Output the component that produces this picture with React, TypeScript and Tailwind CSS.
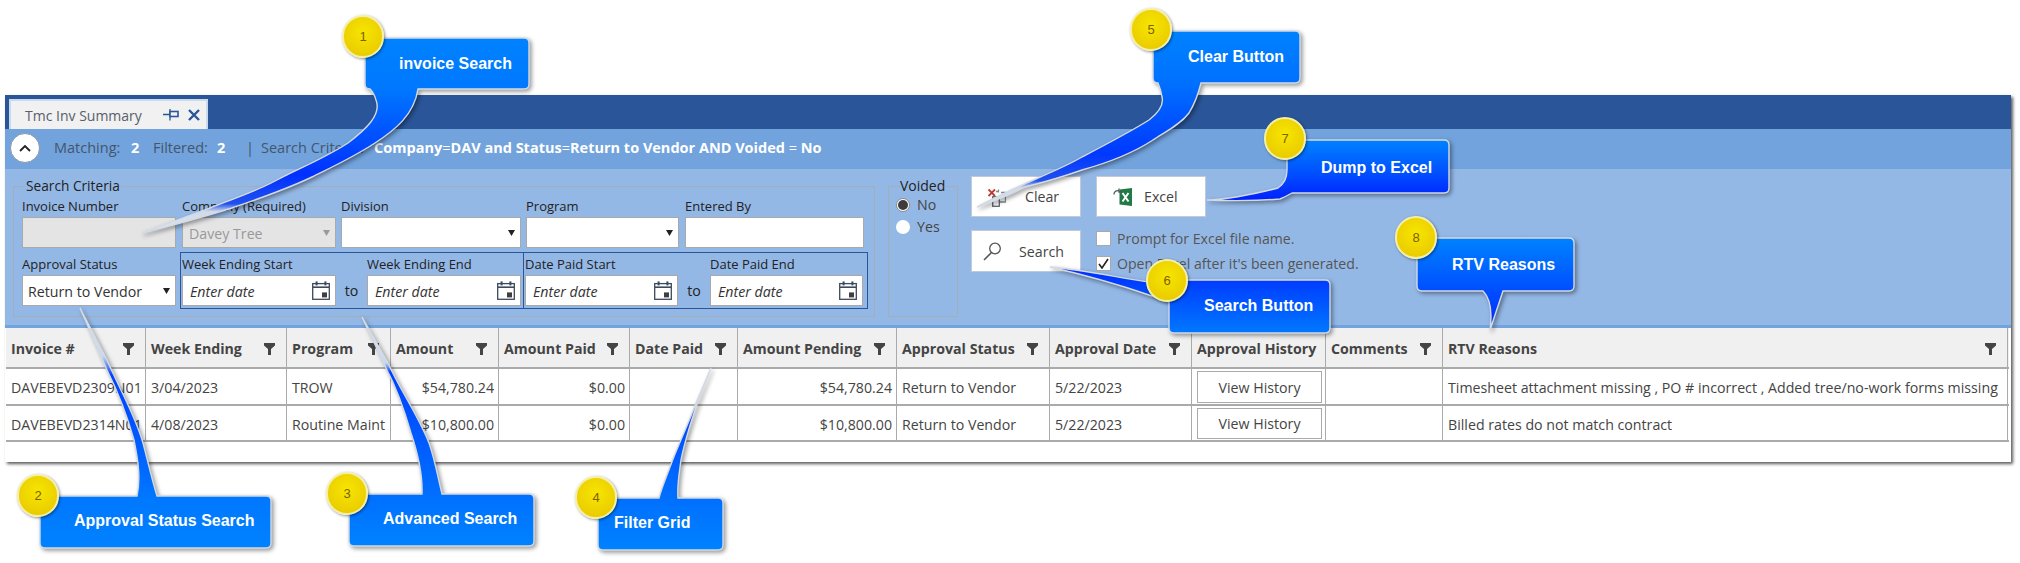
import type { ReactNode } from "react";

// Invoice summary help screen: the grid panel sits in normal flow, numbered
// callouts are drawn on top of it.

const UI = "font-['Open_Sans',sans-serif]";

type Row = { inv: string; week: string; program: string; amount: string; reasons: string };

const ROWS: Row[] = [
  {
    inv: "DAVEBEVD2309N01",
    week: "3/04/2023",
    program: "TROW",
    amount: "$54,780.24",
    reasons: "Timesheet attachment missing , PO # incorrect , Added tree/no-work forms missing",
  },
  { inv: "DAVEBEVD2314N01", week: "4/08/2023", program: "Routine Maint", amount: "$10,800.00", reasons: "Billed rates do not match contract" },
];

const COLUMNS = [
  { label: "Invoice #", width: "w-[140px]" },
  { label: "Week Ending", width: "w-[141px]" },
  { label: "Program", width: "w-[104px]" },
  { label: "Amount", width: "w-[108px]" },
  { label: "Amount Paid", width: "w-[131px]" },
  { label: "Date Paid", width: "w-[108px]" },
  { label: "Amount Pending", width: "w-[159px]" },
  { label: "Approval Status", width: "w-[153px]" },
  { label: "Approval Date", width: "w-[142px]" },
  { label: "Approval History", width: "w-[134px]", noFilter: true },
  { label: "Comments", width: "w-[117px]" },
  { label: "RTV Reasons", width: "w-[565px]" },
];

const CELL = "border-r border-b-2 border-[#aaa] pt-[3px]";

function FilterIcon() {
  return (
    <svg width="11" height="12" viewBox="0 0 11 12" className="shrink-0">
      <path d="M0 0H11V2.5L7 6V12H4V6L0 2.5Z" fill="#444" />
    </svg>
  );
}

function CalendarIcon() {
  return (
    <svg width="18" height="19" viewBox="0 0 18 19" className="shrink-0">
      <rect x="0.7" y="2.6" width="16.6" height="15.7" fill="#fff" stroke="#3d4a5c" strokeWidth="1.3" />
      <path d="M1 6.2H17" stroke="#3d4a5c" strokeWidth="1.6" />
      <rect x="3.6" y="0.4" width="2" height="4" fill="#3d4a5c" />
      <rect x="12.4" y="0.4" width="2" height="4" fill="#3d4a5c" />
      <rect x="10" y="11.4" width="5" height="5" fill="#3f3f3f" />
    </svg>
  );
}

function Arrow({ muted }: { muted?: boolean }) {
  return (
    <svg width="7" height="6" viewBox="0 0 7 6" className="shrink-0">
      <path d="M0 0H7L3.5 6Z" fill={muted ? "#999" : "#222"} />
    </svg>
  );
}

function Label({ children }: { children: ReactNode }) {
  return <div className="h-[20px] text-[13px] leading-[20px] whitespace-nowrap text-[#222]">{children}</div>;
}

function Input({ label, className, children }: { label: string; className: string; children?: ReactNode }) {
  return (
    <div className="flex flex-col">
      <Label>{label}</Label>
      <div className={`mt-[1px] flex h-[31px] items-center justify-between border border-[#a9a9a9] pr-[5px] pl-[5px] text-[14.2px] ${className}`}>
        {children}
      </div>
    </div>
  );
}

function DateField({ label, width }: { label: string; width: string }) {
  return (
    <Input label={label} className={`bg-white ${width}`}>
      <span className="pt-[2px] pl-[2px] text-[#333] italic">Enter date</span>
      <CalendarIcon />
    </Input>
  );
}

function GridButton({ icon, label, className }: { icon: ReactNode; label: string; className: string }) {
  return (
    <button type="button" className={`flex w-[110px] items-center border border-[#c0cad8] bg-white pt-[1px] text-[14.2px] text-[#444] ${className}`}>
      {icon}
      {label}
    </button>
  );
}

function Panel() {
  return (
    <div className="w-[2006px] bg-white shadow-[2px_2px_3px_rgba(0,0,0,0.65)]">
      {/* Tab strip */}
      <div className="flex h-[34px] items-end bg-[#2a5699] pl-[4px]">
        <div className="flex h-[30px] w-[199px] items-center border-x-2 border-t-2 border-[#c9d9ee] bg-[#f1f1f1] pl-[14px] text-[14px] text-[#56606c]">
          <span className="w-[138px] whitespace-nowrap">Tmc Inv Summary</span>
          <svg width="16" height="12" viewBox="0 0 16 12" className="shrink-0">
            <path d="M0 5.5H7M7 0V11.5" fill="none" stroke="#2a5699" strokeWidth="1.3" />
            <rect x="7" y="2.5" width="8" height="5" fill="#f1f1f1" stroke="#2a5699" strokeWidth="1.6" />
          </svg>
          <svg width="12" height="12" viewBox="0 0 12 12" className="ml-[9px] shrink-0">
            <path d="M1 1L11 11M11 1L1 11" stroke="#2a5699" strokeWidth="2.4" />
          </svg>
        </div>
      </div>

      {/* Matching bar */}
      <div className="flex h-[40px] items-center bg-[#72a3dd] pb-[3px] text-[14.5px] whitespace-nowrap text-[#44566c]">
        <div className="mr-[14px] ml-[5px] flex h-[30px] w-[30px] items-center justify-center rounded-full border border-[#8a97a8] bg-white">
          <svg width="12" height="8" viewBox="0 0 12 8">
            <path d="M1 7L6 2L11 7" fill="none" stroke="#222" strokeWidth="1.8" />
          </svg>
        </div>
        <span className="w-[77px]">Matching:</span>
        <span className="w-[22px] font-bold text-white">2</span>
        <span className="w-[64px]">Filtered:</span>
        <span className="w-[29px] font-bold text-white">2</span>
        <span className="w-[15px]">|</span>
        <span className="w-[113px]">Search Criteria:</span>
        <span className="font-bold text-white">
          Company<span className="font-normal">=</span>DAV and Status<span className="font-normal">=</span>Return to Vendor AND Voided <span className="font-normal">=</span> No
        </span>
      </div>

      {/* Search area */}
      <div className="flex h-[159px] border-b-[3px] border-[#72a3dd] bg-[#94b8e6] pt-[7px] pl-[8px]">
        <fieldset className="h-[141px] w-[862px] border border-[#a4aeb8] pl-[8px]">
          <legend className="ml-[3px] h-[20px] px-[1px] text-[13.7px] leading-[20px] text-[#222]">Search Criteria</legend>
          <div className="flex">
            <Input label="Invoice Number" className="w-[154px] bg-[#e4e4e4]" />
            <div className="ml-[6px]">
              <Input label="Company (Required)" className="w-[154px] bg-[#e4e4e4] text-[#999]">
                <span className="pt-[2px] pl-[1px]">Davey Tree</span>
                <Arrow muted />
              </Input>
            </div>
            <div className="ml-[5px]">
              <Input label="Division" className="w-[180px] bg-white">
                <span />
                <Arrow />
              </Input>
            </div>
            <div className="ml-[5px]">
              <Input label="Program" className="w-[153px] bg-white">
                <span />
                <Arrow />
              </Input>
            </div>
            <div className="ml-[6px]">
              <Input label="Entered By" className="w-[179px] bg-white" />
            </div>
          </div>
          <div className="mt-[4px] flex">
            <div className="pt-[2px]">
              <Input label="Approval Status" className="w-[154px] bg-white text-[#333]">
                <span className="pt-[2px]">Return to Vendor</span>
                <Arrow />
              </Input>
            </div>
            <div className="ml-[4px] flex h-[57px] w-[344px] border border-[#2a5699] pt-[1px] pl-[1px]">
              <DateField label="Week Ending Start" width="w-[154px]" />
              <span className="flex w-[31px] items-end justify-center pb-[7px] text-[14.2px] text-[#222]">to</span>
              <DateField label="Week Ending End" width="w-[154px]" />
            </div>
            <div className="ml-[-1px] flex h-[57px] w-[345px] border border-[#2a5699] pt-[1px] pl-[1px]">
              <DateField label="Date Paid Start" width="w-[153px]" />
              <span className="flex w-[32px] items-end justify-center pb-[7px] text-[14.2px] text-[#222]">to</span>
              <DateField label="Date Paid End" width="w-[153px]" />
            </div>
          </div>
        </fieldset>

        <fieldset className="ml-[13px] h-[141px] w-[70px] border border-[#a4aeb8] pl-[7px]">
          <legend className="ml-[4px] h-[20px] text-[14px] leading-[20px] text-[#222]">Voided</legend>
          <div className="mt-[-2px] flex h-[22px] items-center gap-[7px] text-[14.2px] text-[#444]">
            <span className="flex h-[14px] w-[14px] shrink-0 items-center justify-center rounded-full border border-[#8a8a8a] bg-white">
              <span className="h-[10px] w-[10px] rounded-full bg-[#3c3c3c]" />
            </span>
            No
          </div>
          <div className="flex h-[22px] items-center gap-[7px] text-[14.2px] text-[#444]">
            <span className="h-[14px] w-[14px] shrink-0 rounded-full bg-white" />
            Yes
          </div>
        </fieldset>

        <div className="ml-[13px] grid grid-cols-[110px_110px] grid-rows-[41px_42px] gap-x-[15px] gap-y-[13px]">
          <GridButton
            className="pl-[16px]"
            label="Clear"
            icon={
              <svg width="18" height="19" viewBox="0 0 18 19" className="mr-[19px] shrink-0">
                <path d="M0.5 1.5L7 8M7 1.5L0.5 8" stroke="#c0392b" strokeWidth="1.8" />
                <path d="M8 3.5H10.5M10.5 1.5V4.5M13 4.5H17.5V14H12" fill="none" stroke="#7f8a94" strokeWidth="1.3" />
                <rect x="4.7" y="8.7" width="6.6" height="9.6" fill="#fff" stroke="#5d666e" strokeWidth="1.3" />
              </svg>
            }
          />
          <GridButton
            className="pl-[16px]"
            label="Excel"
            icon={
              <svg width="19" height="18" viewBox="0 0 19 18" className="mr-[12px] shrink-0">
                <path d="M6.5 1.5L19 0V18L6.5 16.5Z" fill="#1f7a45" />
                <path d="M9.5 5L15.5 13.5M15.5 5L9.5 13.5" stroke="#fff" strokeWidth="2" />
                <path d="M1 6.5A3.4 3.4 0 0 1 6.5 3.5M6 0.5V4H9" fill="none" stroke="#4d5a60" strokeWidth="1.3" />
              </svg>
            }
          />
          <GridButton
            className="pl-[11px]"
            label="Search"
            icon={
              <svg width="18" height="19" viewBox="0 0 18 19" className="mr-[18px] shrink-0">
                <circle cx="12" cy="6.5" r="5.3" fill="none" stroke="#555" strokeWidth="1.3" />
                <path d="M8.5 10.5L1 18" stroke="#555" strokeWidth="1.6" />
              </svg>
            }
          />
          <div className="flex flex-col gap-[10px] pt-[1px] text-[14.1px] whitespace-nowrap text-[#555]">
            <div className="flex h-[15px] items-center gap-[6px]">
              <span className="h-[15px] w-[15px] shrink-0 border border-[#a9a9a9] bg-white" />
              Prompt for Excel file name.
            </div>
            <div className="flex h-[15px] items-center gap-[6px]">
              <span className="flex h-[15px] w-[15px] shrink-0 items-center justify-center border border-[#a9a9a9] bg-white">
                <svg width="11" height="11" viewBox="0 0 11 11">
                  <path d="M1 6L4 10L10 1" fill="none" stroke="#222" strokeWidth="1.6" />
                </svg>
              </span>
              Open Excel after it's been generated.
            </div>
          </div>
        </div>
      </div>

      {/* Grid */}
      <table className="ml-[1px] w-[2003px] table-fixed border-separate border-spacing-0 text-[14.2px] text-[#444]">
        <colgroup>
          {COLUMNS.map((c) => (
            <col key={c.label} className={c.width} />
          ))}
          <col />
        </colgroup>
        <thead>
          <tr className="h-[41px] bg-[#f0f0f0]">
            {COLUMNS.map((c) => (
              <th key={c.label} className={`${CELL} pr-[11px] pl-[5px] text-left font-bold whitespace-nowrap`}>
                <div className="flex items-center justify-between">
                  {c.label}
                  {c.noFilter ? null : <FilterIcon />}
                </div>
              </th>
            ))}
            <th className="border-b-2 border-[#aaa]" />
          </tr>
        </thead>
        <tbody>
          {ROWS.map((r, i) => (
            <tr key={r.inv} className={i === 0 ? "h-[37px]" : "h-[36px]"}>
              <td className={`${CELL} pl-[5px] whitespace-nowrap`}>{r.inv}</td>
              <td className={`${CELL} pl-[5px]`}>{r.week}</td>
              <td className={`${CELL} pl-[5px] whitespace-nowrap`}>{r.program}</td>
              <td className={`${CELL} pr-[4px] text-right`}>{r.amount}</td>
              <td className={`${CELL} pr-[4px] text-right`}>$0.00</td>
              <td className={CELL} />
              <td className={`${CELL} pr-[4px] text-right`}>{r.amount}</td>
              <td className={`${CELL} pl-[5px]`}>Return to Vendor</td>
              <td className={`${CELL} pl-[5px]`}>5/22/2023</td>
              <td className="border-r border-b-2 border-[#aaa] pt-[2px] pl-[5px] align-top">
                <button type="button" className={`block w-[125px] border border-[#aaa] bg-white pt-[1px] ${i === 0 ? "h-[32px]" : "h-[31px]"}`}>
                  View History
                </button>
              </td>
              <td className={CELL} />
              <td className={`${CELL} pl-[5px] whitespace-nowrap`}>{r.reasons}</td>
              <td className="border-b-2 border-[#aaa]" />
            </tr>
          ))}
        </tbody>
      </table>
      <div className="h-[20px]" />
    </div>
  );
}

type Stop = [number, string];

const SHAPES: { id: string; y1: number; y2: number; stops: Stop[]; d: string }[] = [
  {
    id: "c1",
    y1: 38,
    y2: 233,
    stops: [
      [0, "#0082ff"],
      [0.26, "#0078ff"],
      [0.7, "#0030ff"],
      [0.85, "#2050f0"],
      [0.89, "#d0daea"],
      [1, "#dfe6ef"],
    ],
    d: "M370 38H524Q529 38 529 43V84Q529 89 524 89H418C414 115 395 130 375 143C352 158 330 168 312 177C285 190 255 200 232 208C200 218 170 226 142 233C165 224 190 216 210 208C235 198 255 192 277 180C300 168 325 158 348 143C365 130 382 115 376 100Q374 93 370 89Q365 89 365 84V43Q365 38 370 38Z",
  },
  {
    id: "c2",
    y1: 308,
    y2: 548,
    stops: [
      [0, "#dfe6ef"],
      [0.2, "#c8d8ee"],
      [0.28, "#0040ff"],
      [0.6, "#0060ff"],
      [0.8, "#0078ff"],
      [1, "#0082ff"],
    ],
    d: "M45 496H137C141 478 138 460 134 440C127 415 117 390 107 370L80 308L107 360C120 390 135 415 143 443C148 462 152 480 157 496H266Q271 496 271 501V543Q271 548 266 548H45Q40 548 40 543V501Q40 496 45 496Z",
  },
  {
    id: "c3",
    y1: 317,
    y2: 546,
    stops: [
      [0, "#dfe6ef"],
      [0.2, "#c8d8ee"],
      [0.24, "#0040ff"],
      [0.6, "#0060ff"],
      [1, "#0082ff"],
    ],
    d: "M354 494H422C423 470 415 445 411 433C403 405 395 385 386 368L362 317L388 363C400 390 418 415 429 443C435 460 438 478 442 494H529Q534 494 534 499V541Q534 546 529 546H354Q349 546 349 541V499Q349 494 354 494Z",
  },
  {
    id: "c4",
    y1: 368,
    y2: 550,
    stops: [
      [0, "#dfe6ef"],
      [0.17, "#c8d8ee"],
      [0.22, "#0040ff"],
      [0.6, "#0068ff"],
      [1, "#0082ff"],
    ],
    d: "M603 498H659C662 487 666 478 670 467C678 445 688 425 696 403L711 368L696 407C690 425 684 445 681 460C679 475 677 485 678 498H718Q723 498 723 503V545Q723 550 718 550H603Q598 550 598 545V503Q598 498 603 498Z",
  },
  {
    id: "c5",
    y1: 31,
    y2: 207,
    stops: [
      [0, "#0082ff"],
      [0.3, "#0070ff"],
      [0.7, "#0038ff"],
      [0.85, "#2050f0"],
      [0.89, "#d0daea"],
      [1, "#e0e4ea"],
    ],
    d: "M1158 31H1295Q1300 31 1300 36V78Q1300 83 1295 83H1201C1198 95 1194 105 1189 113C1180 125 1165 132 1153 140C1130 155 1100 165 1082 170C1065 176 1045 182 1025 187C1010 195 995 201 977 207C990 200 1005 193 1020 186C1040 177 1065 167 1082 157C1105 145 1130 132 1149 120C1158 113 1164 105 1162 97Q1161 90 1158 83Q1153 83 1153 78V36Q1153 31 1158 31Z",
  },
  {
    id: "c6",
    y1: 270,
    y2: 333,
    stops: [
      [0, "#0030ff"],
      [1, "#0078ff"],
    ],
    d: "M1174 280H1325Q1330 280 1330 285V328Q1330 333 1325 333H1174Q1169 333 1169 328V302Q1160 298 1149 295C1120 285 1085 275 1050 267C1085 270 1120 278 1149 282Q1160 280 1174 280Z",
  },
  {
    id: "c7",
    y1: 140,
    y2: 200,
    stops: [
      [0, "#0082ff"],
      [0.55, "#0050ff"],
      [1, "#0020ff"],
    ],
    d: "M1292 140H1444Q1449 140 1449 145V188Q1449 193 1444 193H1292Q1285 197 1280 199C1255 201 1230 201 1207 200C1235 199 1262 192 1278 188Q1287 182 1287 170V145Q1287 140 1292 140Z",
  },
  {
    id: "c8",
    y1: 238,
    y2: 330,
    stops: [
      [0, "#0082ff"],
      [0.55, "#0050ff"],
      [0.9, "#0030ff"],
      [1, "#c8d8ee"],
    ],
    d: "M1422 238H1569Q1574 238 1574 243V286Q1574 291 1569 291H1503Q1495 315 1490 330C1492 315 1492 300 1483 291H1422Q1417 291 1417 286V243Q1417 238 1422 238Z",
  },
];

const LABELS = [
  { text: "invoice Search", className: "left-[399px] top-[52px]" },
  { text: "Approval Status Search", className: "left-[74px] top-[509px]" },
  { text: "Advanced Search", className: "left-[383px] top-[507px]" },
  { text: "Filter Grid", className: "left-[614px] top-[511px]" },
  { text: "Clear Button", className: "left-[1188px] top-[45px]" },
  { text: "Search Button", className: "left-[1204px] top-[294px]" },
  { text: "Dump to Excel", className: "left-[1321px] top-[156px]" },
  { text: "RTV Reasons", className: "left-[1452px] top-[253px]" },
];

const BADGES = [
  { n: 1, className: "left-[342px] top-[15px]" },
  { n: 2, className: "left-[17px] top-[474px]" },
  { n: 3, className: "left-[326px] top-[472px]" },
  { n: 4, className: "left-[575px] top-[476px]" },
  { n: 5, className: "left-[1130px] top-[8px]" },
  { n: 6, className: "left-[1146px] top-[259px]" },
  { n: 7, className: "left-[1264px] top-[117px]" },
  { n: 8, className: "left-[1395px] top-[216px]" },
];

function Callouts() {
  return (
    <>
      <svg width="2020" height="563" viewBox="0 0 2020 563" className="pointer-events-none absolute top-0 left-0">
        <defs>
          {SHAPES.map((s) => (
            <linearGradient key={s.id} id={s.id} gradientUnits="userSpaceOnUse" x1="0" x2="0" y1={s.y1} y2={s.y2}>
              {s.stops.map(([o, c]) => (
                <stop key={o} offset={o} stopColor={c} />
              ))}
            </linearGradient>
          ))}
        </defs>
        {SHAPES.map((s) => (
          <path
            key={s.id}
            d={s.d}
            fill={`url(#${s.id})`}
            stroke="#d3dae3"
            strokeWidth="1.4"
            className="drop-shadow-[2px_2px_2px_rgba(0,0,0,0.4)]"
          />
        ))}
      </svg>
      {LABELS.map((l) => (
        <div key={l.text} className={`absolute h-[24px] font-['Liberation_Sans',sans-serif] text-[16px] leading-[24px] font-bold whitespace-nowrap text-white ${l.className}`}>
          {l.text}
        </div>
      ))}
      {BADGES.map((b) => (
        <div
          key={b.n}
          className={`absolute flex h-[43px] w-[42px] items-center justify-center rounded-full border-2 border-[#f4efa6] bg-[radial-gradient(circle_at_50%_40%,#f7e600,#e6c400)] font-['Liberation_Sans',sans-serif] text-[13px] text-[#7d5f00] shadow-[1px_1px_3px_rgba(0,0,0,0.45)] ${b.className}`}
        >
          {b.n}
        </div>
      ))}
    </>
  );
}

export default function App() {
  return (
    <div className={`relative h-[563px] w-[2020px] overflow-hidden bg-white pt-[95px] pl-[5px] ${UI}`}>
      <Panel />
      <Callouts />
    </div>
  );
}
